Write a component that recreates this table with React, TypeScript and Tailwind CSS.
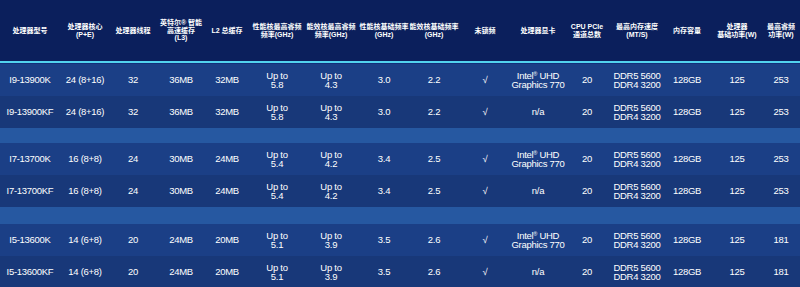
const cols = "grid grid-cols-[60px_50px_46px_50px_42px_58px_50px_56px_44px_58px_48px_50px_50px_50px_50px_38px]"

const headers: string[][] = [
  ["处理器型号"],
  ["处理器核心", "(P+E)"],
  ["处理器线程"],
  ["英特尔® 智能", "高速缓存", "(L3)"],
  ["L2 总缓存"],
  ["性能核最高睿频", "频率(GHz)"],
  ["能效核最高睿频", "频率(GHz)"],
  ["性能核基础频率", "(GHz)"],
  ["能效核基础频率", "(GHz)"],
  ["未锁频"],
  ["处理器显卡"],
  ["CPU PCIe", "通道总数"],
  ["最高内存速度", "(MT/S)"],
  ["内存容量"],
  ["处理器", "基础功率(W)"],
  ["最高睿频", "功率(W)"],
]

type Cpu = {
  name: string
  cores: string
  threads: string
  l3: string
  l2: string
  pMax: string
  eMax: string
  pBase: string
  eBase: string
  igpu: boolean
  turbo: string
}

const groups: Cpu[][] = [
  [
    { name: "I9-13900K", cores: "24 (8+16)", threads: "32", l3: "36MB", l2: "32MB", pMax: "5.8", eMax: "4.3", pBase: "3.0", eBase: "2.2", igpu: true, turbo: "253" },
    { name: "I9-13900KF", cores: "24 (8+16)", threads: "32", l3: "36MB", l2: "32MB", pMax: "5.8", eMax: "4.3", pBase: "3.0", eBase: "2.2", igpu: false, turbo: "253" },
  ],
  [
    { name: "I7-13700K", cores: "16 (8+8)", threads: "24", l3: "30MB", l2: "24MB", pMax: "5.4", eMax: "4.2", pBase: "3.4", eBase: "2.5", igpu: true, turbo: "253" },
    { name: "I7-13700KF", cores: "16 (8+8)", threads: "24", l3: "30MB", l2: "24MB", pMax: "5.4", eMax: "4.2", pBase: "3.4", eBase: "2.5", igpu: false, turbo: "253" },
  ],
  [
    { name: "I5-13600K", cores: "14 (6+8)", threads: "20", l3: "24MB", l2: "20MB", pMax: "5.1", eMax: "3.9", pBase: "3.5", eBase: "2.6", igpu: true, turbo: "181" },
    { name: "I5-13600KF", cores: "14 (6+8)", threads: "20", l3: "24MB", l2: "20MB", pMax: "5.1", eMax: "3.9", pBase: "3.5", eBase: "2.6", igpu: false, turbo: "181" },
  ],
]

function Cell({ children }: { children: React.ReactNode }) {
  return <div className="flex flex-col items-center justify-center text-center whitespace-nowrap">{children}</div>
}

function Row({ cpu, odd }: { cpu: Cpu; odd: boolean }) {
  return (
    <div className={`${cols} h-[32px] ${odd ? "bg-[#1b3f86]" : "bg-[#183879]"}`}>
      <Cell>{cpu.name}</Cell>
      <Cell>{cpu.cores}</Cell>
      <Cell>{cpu.threads}</Cell>
      <Cell>{cpu.l3}</Cell>
      <Cell>{cpu.l2}</Cell>
      <Cell>
        <span>Up to</span>
        <span>{cpu.pMax}</span>
      </Cell>
      <Cell>
        <span>Up to</span>
        <span>{cpu.eMax}</span>
      </Cell>
      <Cell>{cpu.pBase}</Cell>
      <Cell>{cpu.eBase}</Cell>
      <Cell>√</Cell>
      <Cell>
        {cpu.igpu ? (
          <>
            <span>
              Intel<sup className="text-[5.5px]">®</sup> UHD
            </span>
            <span>Graphics 770</span>
          </>
        ) : (
          <span>n/a</span>
        )}
      </Cell>
      <Cell>20</Cell>
      <Cell>
        <span>DDR5 5600</span>
        <span>DDR4 3200</span>
      </Cell>
      <Cell>128GB</Cell>
      <Cell>125</Cell>
      <Cell>{cpu.turbo}</Cell>
    </div>
  )
}

export default function App() {
  return (
    <div className="w-[800px] h-[287px] overflow-hidden bg-[#0b1f5c] text-white font-['Liberation_Sans','Noto_Sans_CJK_SC',sans-serif]">
      <div className={`${cols} h-[61px] text-[7px] leading-[7.5px] font-bold`}>
        {headers.map((lines, i) => (
          <Cell key={i}>
            {lines.map((l) => (
              <span key={l}>{l}</span>
            ))}
          </Cell>
        ))}
      </div>
      <div className="h-[2px] bg-[#52d3ee]" />
      <div className="h-[1px] bg-[#13307a]" />
      <div className="text-[9.5px] leading-[9.5px] tracking-[-0.03em]">
        {groups.map((g, gi) => (
          <div key={gi}>
            {gi > 0 && <div className={gi === 1 ? "h-[15px] bg-[#2658a1]" : "h-[17px] bg-[#2658a1]"} />}
            {g.map((cpu, ri) => (
              <Row key={cpu.name} cpu={cpu} odd={ri === 0} />
            ))}
          </div>
        ))}
      </div>
    </div>
  )
}
